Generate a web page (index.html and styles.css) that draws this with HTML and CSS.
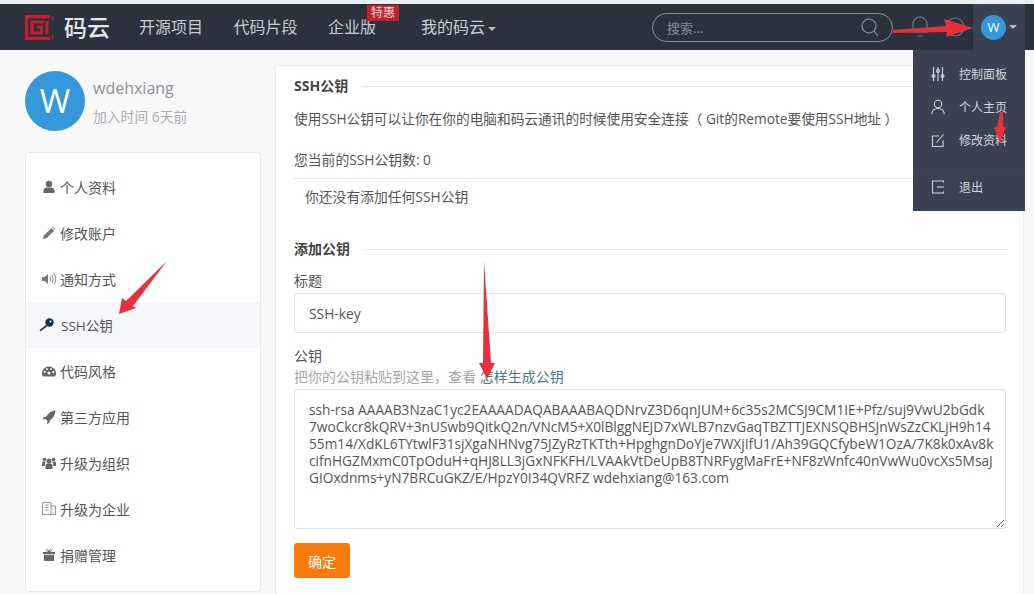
FILE: index.html
```html
<!DOCTYPE html>
<html lang="zh">
<head>
<meta charset="utf-8">
<title>SSH公钥 - 码云</title>
<link rel="stylesheet" href="styles.css">
</head>
<body>
<header class="topbar">
  <a class="logo">
    <svg class="logo-mark" width="29" height="25" viewBox="0 0 29 25" fill="none" stroke="#c4202b" stroke-width="3.200">
      <path d="M25 1.600H1.600v21.800H25"/><path d="M19 7H7v11h9.500v-6H12"/><path d="M22 6v13" stroke-width="3"/><path d="M27.500 1v4M27.500 20v4" stroke-width="1.500"/>
    </svg>
    <span class="logo-text">码云</span>
  </a>
  <nav class="nav">
    <a class="nav-item">开源项目</a>
    <a class="nav-item">代码片段</a>
    <a class="nav-item nav-ent">企业版<span class="badge">特惠</span></a>
    <a class="nav-item">我的码云<i class="caret"></i></a>
  </nav>
  <div class="search">
    <span class="search-text">搜索...</span>
    <svg width="20" height="20" viewBox="0 0 20 20" fill="none" stroke="#8b909a" stroke-width="1.200"><circle cx="9" cy="9" r="7"/><path d="M14 14l4 5"/></svg>
  </div>
  <svg class="bell" width="18" height="24" viewBox="0 0 18 24" fill="none" stroke="#6f7480" stroke-width="1.200"><path d="M2 17V9a7 7 0 0 1 14 0v8z"/><path d="M9 1v1M6 21h6"/></svg>
  <svg class="help" width="20" height="20" viewBox="0 0 20 20" fill="none" stroke="#6f7480" stroke-width="1.200"><circle cx="10" cy="10" r="9"/></svg>
  <div class="user">
    <span class="user-avatar">W</span><i class="caret caret-user"></i>
  </div>
</header>

<div class="page">
  <aside class="side">
    <div class="profile">
      <span class="avatar">W</span>
      <div class="profile-text">
        <div class="profile-name">wdehxiang</div>
        <div class="profile-time">加入时间 6天前</div>
      </div>
    </div>
    <ul class="menu">
      <li class="menu-item"><svg class="mi" viewBox="0 0 14 14" fill="#666"><circle cx="7" cy="4" r="3.200"/><path d="M1.500 13v-2.500c0-2 2-3 3-3h5c1 0 3 1 3 3V13z"/></svg>个人资料</li>
      <li class="menu-item"><svg class="mi" viewBox="0 0 14 14" fill="#777"><path d="M1 13l.8-3.500L9.500 2l2.700 2.700L4.500 12.300z"/><path d="M10.300 1.300l.7-.5 2.300 2.300-.5.7z"/></svg>修改账户</li>
      <li class="menu-item"><svg class="mi" viewBox="0 0 14 14" fill="#777"><path d="M0 5h2.500L6 2v10L2.500 9H0z"/><path d="M8 4.500q1.500 2.500 0 5M10 3q2.500 4 0 8M12 1.500q3.500 5.500 0 11" fill="none" stroke="#888" stroke-width="1"/></svg>通知方式</li>
      <li class="menu-item active"><svg class="mi mi-key" viewBox="0 0 15 14"><circle cx="10.500" cy="4.500" r="4.200" fill="#1f2f50"/><circle cx="11.500" cy="3.500" r="1" fill="#f6f7fa"/><path d="M8 6L.5 12l1 1.500L9.500 7.500z" fill="#4a3c30"/></svg><span class="ssh">SSH公钥</span></li>
      <li class="menu-item"><svg class="mi" viewBox="0 0 14 14" fill="#666"><path d="M0 9.500a7 7 0 0 1 14 0V11l-1.500 1.500h-11L0 11z"/><circle cx="7" cy="9" r="1.500" fill="#fff"/><circle cx="2.700" cy="8" r="1" fill="#fff"/><circle cx="11.300" cy="8" r="1" fill="#fff"/><circle cx="5" cy="5" r=".9" fill="#fff"/><circle cx="9" cy="5" r=".9" fill="#fff"/></svg>代码风格</li>
      <li class="menu-item"><svg class="mi" viewBox="0 0 14 14" fill="#666"><path d="M13.500.5C9 .8 6.500 3 4.500 6.500L2 7 .5 9.500l3-.5 2 2-.5 3 2.500-1.500.5-2.500C11 8.500 13.200 5 13.500.5z"/></svg>第三方应用</li>
      <li class="menu-item"><svg class="mi" viewBox="0 0 14 14" fill="#666"><circle cx="7" cy="5" r="2.500"/><circle cx="2.500" cy="3.500" r="1.800"/><circle cx="11.500" cy="3.500" r="1.800"/><path d="M3.500 13V9.500c0-1 1-2 2-2h3c1 0 2 1 2 2V13z"/><path d="M0 10V7c0-1 .8-1.500 1.500-1.500h2L2.600 10zM14 10V7c0-1-.8-1.500-1.500-1.500h-2l.9 4.500z"/></svg>升级为组织</li>
      <li class="menu-item"><svg class="mi" viewBox="0 0 14 14" fill="none" stroke="#999" stroke-width="1"><path d="M.5.500h8.500v12H.5zM9 4h4.500v8.500H9M0 12.500h14M3 3h3.500M3 5.500h3.500M3 8h3.500M11 7v1M11 10v1"/></svg>升级为企业</li>
      <li class="menu-item"><svg class="mi" viewBox="0 0 14 14" fill="#666"><path d="M2 7h10v6H2zM1 4h12v2.300H1z"/><path d="M7 4C5.500 4 4 3 4.500 1.800S6.700 1.500 7 4c.3-2.500 2-3.400 2.500-2.200S8.500 4 7 4z" fill="none" stroke="#666" stroke-width="1"/></svg>捐赠管理</li>
    </ul>
  </aside>

  <main class="card">
    <div class="legend"><b>SSH公钥</b></div>
    <p class="intro">使用SSH公钥可以让你在你的电脑和码云通讯的时候使用安全连接（ Git的Remote要使用SSH地址 ）</p>
    <p class="count">您当前的SSH公钥数: 0</p>
    <div class="empty">你还没有添加任何SSH公钥</div>
    <div class="legend legend-add"><b>添加公钥</b></div>
    <label class="label label-title">标题</label>
    <input class="input" value="SSH-key">
    <label class="label label-key">公钥</label>
    <div class="help-text">把你的公钥粘贴到这里，查看 <a class="link">怎样生成公钥</a></div>
    <textarea class="textarea" spellcheck="false">ssh-rsa AAAAB3NzaC1yc2EAAAADAQABAAABAQDNrvZ3D6qnJUM+6c35s2MCSJ9CM1IE+Pfz/suj9VwU2bGdk
7woCkcr8kQRV+3nUSwb9QitkQ2n/VNcM5+X0lBlggNEJD7xWLB7nzvGaqTBZTTJEXNSQBHSJnWsZzCKLjH9h14
55m14/XdKL6TYtwlF31sjXgaNHNvg75JZyRzTKTth+HpghgnDoYje7WXjIfU1/Ah39GQCfybeW1OzA/7K8k0xAv8k
cifnHGZMxmC0TpOduH+qHJ8LL3jGxNFKFH/LVAAkVtDeUpB8TNRFygMaFrE+NF8zWnfc40nVwWu0vcXs5MsaJ
GIOxdnms+yN7BRCuGKZ/E/HpzY0I34QVRFZ wdehxiang@163.com</textarea>
    <button class="btn">确定</button>
  </main>
</div>

<div class="dropdown">
  <a class="dd-item"><svg class="dd-icon" viewBox="0 0 14 16"><path d="M2.500 1v14M7 1v14M11.500 1v14"/><circle cx="2.500" cy="10" r="1.500"/><circle cx="7" cy="5" r="1.500"/><circle cx="11.500" cy="10" r="1.500"/></svg>控制面板</a>
  <a class="dd-item"><svg class="dd-icon" viewBox="0 0 14 16"><circle cx="7" cy="5" r="3.700"/><path d="M.7 15c.3-3.500 2.500-5.500 6.300-5.500s6 2 6.300 5.500"/></svg>个人主页</a>
  <a class="dd-item"><svg class="dd-icon" viewBox="0 0 14 16"><path d="M12 8.500v6H1.500V4h6.500"/><path d="M5.500 10.500L12.500 2.500"/></svg>修改资料</a>
  <div class="dd-sep"></div>
  <a class="dd-item"><svg class="dd-icon" viewBox="0 0 14 16"><path d="M12.500 3.500V2H1.500v12h11v-1.500M6 8h7M9 8h3" /></svg>退出</a>
</div>

<svg class="arrows" width="1034" height="594" viewBox="0 0 1034 594">
  <polygon points="893,30 946,26 944,19 973,28 946,37 947,32 893,33"/>
  <polygon points="1000,112 1003,112 1003,127 1006,127 1000,143 994,127 997,127"/>
  <polygon points="167,261 133,306 136,308 119,314 122,298 126,301"/>
  <polygon points="484,261 491,363 495,363 487,379 479,363 483,363"/>
</svg>
</body>
</html>
```

FILE: styles.css
```css
* { box-sizing: border-box; }
html, body { margin: 0; height: 594px; overflow: hidden; }
body {
  background: #f8f8f8;
  border-top: 4px solid #e9eef6;
  font-family: "Open Sans", "Noto Sans CJK SC", sans-serif;
  font-size: 13.800px;
  color: #555;
}
.topbar {
  height: 46px;
  background: #2c3140;
  display: flex;
  align-items: center;
  padding-left: 25px;
}
.logo { display: flex; align-items: center; width: 114px; flex: none; }
.logo-mark { flex: none; }
.logo-text { margin-left: 10px; font-size: 23px; font-weight: 500; color: #e4e6ea; line-height: 1; }
.nav { display: flex; width: 513px; flex: none; }
.nav-item { position: relative; font-size: 16px; color: #c9ccd3; margin-right: 30.500px; line-height: 24px; white-space: nowrap; }
.nav-ent { margin-right: 45px; }
.badge {
  position: absolute;
  left: 39px;
  top: -10px;
  width: 32px;
  height: 16px;
  background: #c4202c;
  color: #f3dcdc;
  font-size: 12px;
  line-height: 16px;
  text-align: center;
}
.caret {
  display: inline-block;
  width: 0;
  height: 0;
  margin-left: 3px;
  vertical-align: 2px;
  border: 4px solid transparent;
  border-top-color: #b9bcc4;
  border-bottom: 0;
}
.search {
  width: 241px;
  height: 29px;
  flex: none;
  border: 1px solid #8b909a;
  border-radius: 15px;
  display: flex;
  align-items: center;
  justify-content: space-between;
  padding: 0 12px 0 14px;
}
.search-text { color: #858a95; font-size: 13px; }
.bell { margin-left: 18px; flex: none; }
.help { margin-left: 16px; flex: none; }
.user {
  margin-left: 8px;
  width: 52px;
  height: 46px;
  background: #3a4152;
  display: flex;
  align-items: center;
  padding-left: 8px;
  flex: none;
}
.user-avatar {
  width: 25px;
  height: 25px;
  border-radius: 50%;
  background: #3498db;
  color: #fff;
  font-size: 13px;
  line-height: 25px;
  text-align: center;
  flex: none;
}
.caret-user { margin-left: 3px; vertical-align: 0; }
.page { display: flex; padding: 15px 10px 0 25px; height: 544px; gap: 14px; }
.side { width: 236px; flex: none; }
.profile { display: flex; padding-top: 6px; height: 87px; }
.avatar {
  width: 60px;
  height: 60px;
  border-radius: 50%;
  background: #3498db;
  color: #fff;
  font-size: 33px;
  line-height: 60px;
  text-align: center;
  flex: none;
}
.profile-text { margin-left: 8px; }
.profile-name { font-size: 16px; color: #8b8f94; line-height: 22px; margin-top: 6px; }
.profile-time { color: #aaadb2; line-height: 20px; margin-top: 8px; }
.menu {
  list-style: none;
  margin: 0;
  padding: 11px 0 13px;
  background: #fff;
  border: 1px solid #e8e8e8;
  border-radius: 4px;
}
.menu-item {
  height: 46px;
  display: flex;
  align-items: center;
  padding-left: 16px;
  font-size: 14px;
  color: #555;
}
.menu-item.active { background: #f6f7fa; }
.mi { width: 14px; height: 14px; margin-right: 4px; flex: none; }
.mi-key { width: 15px; margin-left: -3px; margin-right: 6px; }
.ssh { font-size: 13.500px; margin-left: 1px; }
.card {
  flex: 1;
  background: #fff;
  border: 1px solid #ececec;
  border-radius: 3px;
  padding: 10px 17px 0 18px;
  height: 530px;
  min-width: 0;
}
.legend { display: flex; align-items: center; line-height: 20px; color: #444; font-size: 14px; }
.legend b { font-weight: 700; }
.legend::after { content: ""; flex: 1; height: 1px; background: #e3e6ea; margin-left: 15px; }
.intro { margin: 13px 0 0; line-height: 20px; white-space: nowrap; font-size: 13.700px; }
.count { margin: 21px 0 0; line-height: 20px; padding-bottom: 8px; border-bottom: 1px solid #e8e8e8; }
.empty { padding: 0 11px; line-height: 20px; margin-top: 8px; }
.legend-add { margin-top: 32px; }
.label { display: block; line-height: 20px; font-size: 14px; }
.label-title { margin-top: 12px; }
.input {
  display: block;
  width: 100%;
  height: 40px;
  margin-top: 2px;
  padding: 0 14px;
  border: 1px solid #dfe2e6;
  border-radius: 3px;
  background: #fff;
  font: 13.800px "Open Sans", "Noto Sans CJK SC", sans-serif;
  color: #555;
  outline: none;
}
.label-key { margin-top: 13px; }
.help-text { color: #a3a6ab; line-height: 20px; margin-top: 1px; font-size: 14px; }
.link { color: #4a7a8c; }
.textarea {
  display: block;
  width: 100%;
  height: 140px;
  margin-top: 2px;
  padding: 11px 14px;
  border: 1px solid #dfe2e6;
  border-radius: 3px;
  font: 13.700px/17px "Open Sans", "Noto Sans CJK SC", sans-serif;
  color: #555;
  white-space: pre;
  overflow: hidden;
  outline: none;
}
.btn {
  display: block;
  width: 56px;
  height: 35px;
  margin-top: 14px;
  background: #fb7a0c;
  border: 0;
  border-radius: 3px;
  color: #fff;
  font: 14px "Noto Sans CJK SC", sans-serif;
}
.dropdown {
  position: absolute;
  left: 913px;
  top: 50px;
  width: 112px;
  height: 161px;
  background: #3a4152;
  padding-top: 7px;
}
.dd-item { display: flex; align-items: center; height: 33px; padding-left: 18px; color: #d4d6db; font-size: 12px; }
.dd-icon { width: 14px; height: 16px; margin-right: 14px; fill: none; stroke: #d0d3d9; stroke-width: 1.100; flex: none; }
.dd-sep { height: 1px; margin: 13px 0 0; background: #3f4658; }
.arrows { position: absolute; left: 0; top: 0; fill: #e8303a; pointer-events: none; }
```
